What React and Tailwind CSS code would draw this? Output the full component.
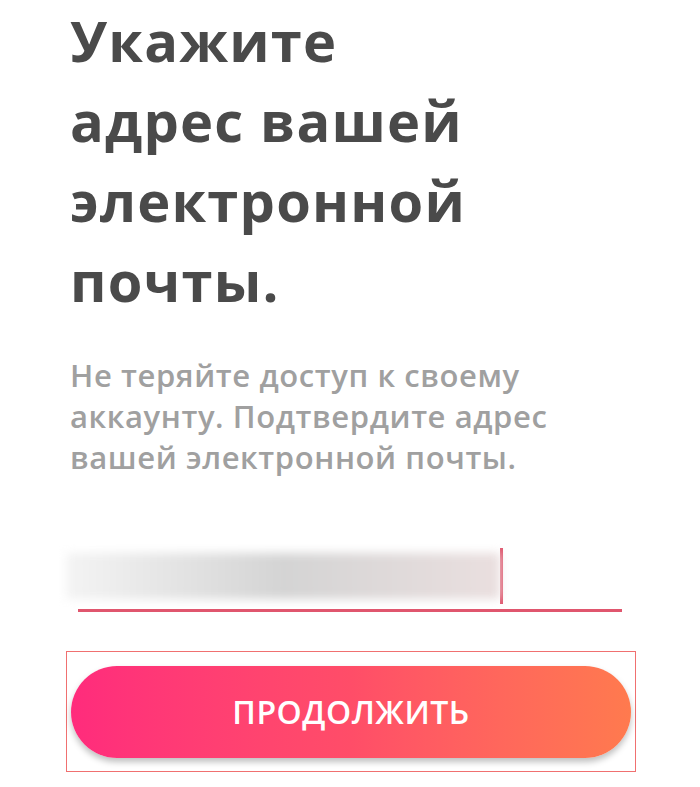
export default function App() {
  return (
    <div className="w-[700px] h-[787px] bg-white overflow-hidden relative" style={{ fontFamily: '"Open Sans", "Noto Sans", sans-serif' }}>
      <div className="pl-[70px] pt-[0px]">
        <h1 className="text-[56px] leading-[80px] font-bold text-[#4a4a4a] tracking-[1.2px]">
          Укажите
          <br />
          адрес вашей
          <br />
          электронной
          <br />
          почты.
        </h1>
        <p className="mt-[35px] text-[31px] leading-[41px] font-semibold text-[#a0a0a0] tracking-[0.6px] w-[600px]">
          Не теряйте доступ к своему
          <br />
          аккаунту. Подтвердите адрес
          <br />
          вашей электронной почты.
        </p>
      </div>
      <div className="mt-[70px] ml-[66px] w-[556px] relative">
        <div className="flex items-center h-[56px]">
          <div className="w-[434px] h-[46px] bg-gradient-to-r from-[#f4f4f4] via-[#d4d4d4] to-[#eadfdf] blur-[5px]" />
          <div className="w-[3px] h-[56px] bg-[#e0566e]" />
        </div>
        <div className="ml-[12px] mt-[5px] h-[3px] bg-[#e0566e]" />
      </div>
      <div className="mt-[39px] ml-[66px] w-[570px] h-[121px] border border-[#f07070] px-[4px] pt-[14px]">
        <button className="w-[560px] h-[92px] rounded-full bg-gradient-to-r from-[#ff2b7c] via-[#ff4d68] to-[#ff7a4e] text-white text-[32px] font-semibold tracking-[0.5px] shadow-[0_4px_6px_rgba(0,0,0,0.25)]">
          ПРОДОЛЖИТЬ
        </button>
      </div>
    </div>
  );
}
